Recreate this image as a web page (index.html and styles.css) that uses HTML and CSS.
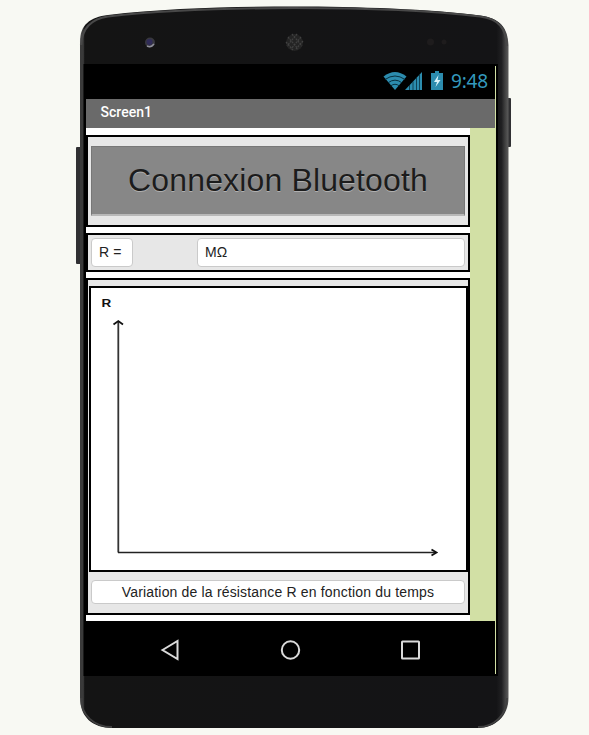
FILE: index.html
```html
<!DOCTYPE html>
<html lang="fr">
<head>
<meta charset="utf-8">
<title>Screen1</title>
<link rel="stylesheet" href="styles.css">
</head>
<body>
<div class="phone">
  <svg class="shell" width="589" height="735" viewBox="0 0 589 735" aria-hidden="true">
    <defs>
      <linearGradient id="edge" x1="0" x2="1" y1="0" y2="0">
        <stop offset="0" stop-color="#777"/><stop offset=".004" stop-color="#444"/><stop offset=".008" stop-color="#363636"/><stop offset=".011" stop-color="#141414"/>
        <stop offset=".972" stop-color="#141416"/><stop offset=".984" stop-color="#202022"/><stop offset=".992" stop-color="#404040"/><stop offset="1" stop-color="#5c5c5c"/>
      </linearGradient>
    </defs>
    <rect x="76" y="147" width="6" height="117" rx="1" fill="#303032"/>
    <rect x="506" y="98" width="5" height="49" rx="1" fill="#303032"/>
    <path d="M80 42C80 25 90 17 108 15C165 8 235 6.500 294 6.500C358 6.500 430 9 480 15.500C500 18 508 28 508.500 45V698C508.500 716 495 728 478 728H112C93 728 80 717 80 698Z" fill="url(#edge)"/>
    <path d="M81 45C82 28 91 19 108 16.500C165 10 235 8 294 8C358 8 430 10.500 480 16.500C499 19 506 28 507 46" fill="none" stroke="#484848" stroke-width="2.200"/>
    <path d="M81 698C81 715 94 727 112 727M478 727C494 727 507 715 507 698" fill="none" stroke="#404040" stroke-width="1.800"/>
    <path d="M81.500 45V698" stroke="#3a3a3a" stroke-width="3"/>
    <circle cx="150" cy="42.500" r="5" fill="#38383e"/><circle cx="149.500" cy="42" r="3" fill="#302c58"/><path d="M147 46q4 2 7-2" stroke="#8f8f9b" stroke-width="1.500" fill="none"/>
    <circle cx="294.500" cy="42.500" r="8.500" fill="#242424"/>
    <path d="M288 37l10 12M292 34l10 12M286 42l7 8M301 37l-10 12M297 34l-10 12M303 41l-7 8" stroke="#414141" stroke-width="1.200" stroke-dasharray="2 1"/>
    <circle cx="430.500" cy="42" r="3.500" fill="#1e1c1d"/><circle cx="444" cy="42" r="2.500" fill="#1e1c1d"/>
    <path d="M83.500 64H498V676H83.500Z" fill="#000"/>
  </svg>
  <main class="screen">
    <header class="status">
      <svg width="62" height="20" viewBox="383 71 62 20" aria-hidden="true">
        <path d="M395 90L383.500 76.500Q395 67.500 406.500 76.500Z" fill="#2c8cae"/>
        <path d="M385 79.500Q395 72.500 405 79.500M388 82.800Q395 77.500 402 82.800M390.500 86Q395 82.500 399.500 86" fill="none" stroke="#08303f" stroke-width="1"/>
        <path d="M405 90L422 72V90Z" fill="#2c8cae"/>
        <path d="M409.500 85V90M413 81.500V90M416.500 78V90M419.500 74.500V90" stroke="#08303f" stroke-width=".8"/>
        <path d="M431 73H435V71H439V73H443V90H431Z" fill="#2c8cae"/>
        <path d="M438.500 75L434 82H437L435.500 87L440.500 80H437.500Z" fill="#d9f3fa"/>
      </svg>
      <span class="clock">9:48</span>
    </header>
    <div class="title">Screen1</div>
    <div class="workspace">
      <div class="app">
        <section class="panel connect"><div class="button">Connexion Bluetooth</div></section>
        <section class="panel reading">
          <div class="field unit">R =</div>
          <div class="field value">MΩ</div>
        </section>
        <section class="panel chart">
          <div class="canvas">
            <svg width="375" height="282" viewBox="91 288 375 282">
              <text class="axis-name" transform="translate(101.500 307) scale(1.350 1)">R</text>
              <path d="M118.300 552.500V321" fill="none" stroke="#333" stroke-width="1.800"/>
              <path d="M118 552.500H436" fill="none" stroke="#222" stroke-width="1.400"/>
              <path d="M113.500 324.500L118.300 321L123 324.500M431.500 549.500L436.500 552.500L431.500 555.500" fill="none" stroke="#111" stroke-width="1.800"/>
            </svg>
          </div>
          <div class="field caption">Variation de la résistance R en fonction du temps</div>
        </section>
      </div>
    </div>
    <nav class="nav">
      <svg width="22" height="22" viewBox="0 0 22 22"><path d="M3.500 11L18.500 2V20Z"/></svg>
      <svg width="22" height="22" viewBox="0 0 22 22"><circle cx="11.500" cy="11" r="8.700"/></svg>
      <svg width="22" height="22" viewBox="0 0 22 22"><rect x="3" y="2.500" width="17" height="17" rx=".5"/></svg>
    </nav>
  </main>
</div>
</body>
</html>
```

FILE: styles.css
```css
* { box-sizing: border-box; }
body { margin: 0; background: #f8f9f3; font-family: "Liberation Sans", Arial, sans-serif; }
.phone { position: relative; width: 589px; height: 735px; padding: 66px 0 0 86px; overflow: hidden; }
.shell { position: absolute; left: 0; top: 0; }
.screen { position: relative; width: 410px; height: 608px; border-right: 1px solid #d2e0a5; }
.status { height: 33px; background: #000; display: flex; align-items: flex-start; justify-content: flex-end; gap: 6px; padding: 5px 7px 0 0; }
.clock { font: 19px/21px "Noto Sans", sans-serif; color: #3499be; width: 37px; white-space: nowrap; letter-spacing: -.2px; }
.title { height: 29px; background: #6a6a6a; color: #fff; font: 500 14px/27px Roboto, sans-serif; padding-left: 14.5px; letter-spacing: .03px; }
.workspace { width: 410px; height: 493px; background: #d2e0a5; }
.app { width: 384px; height: 493px; background: #fff; padding-top: 7px; display: flex; flex-direction: column; gap: 6px; }
.panel { border: 2px solid #000; background: #e7e7e7; }
.connect { height: 92px; padding: 9px 3px; }
.button { height: 70px; background: #878787; border: 1px solid #777; border-bottom: 2px solid #b8b8b8; color: #1c1c1c; font-size: 32px; line-height: 66px; text-align: center; letter-spacing: .14px; text-shadow: 0 1px 0 #b0b0b0; white-space: nowrap; }
.reading { height: 39px; padding: 3px; display: flex; justify-content: space-between; }
.field { height: 29px; border: 1px solid #cacaca; border-radius: 4px; background: #fff; color: #222; font-size: 14px; line-height: 27px; padding-left: 7px; white-space: nowrap; letter-spacing: .17px; }
.unit { width: 42px; }
.value { width: 268px; }
.chart { height: 337px; padding: 6px 0 0 1px; }
.canvas { width: 379px; height: 286px; border: 2px solid #000; background: #fff; }
.canvas svg { display: block; }
.axis-name { font: bold 10px "Liberation Sans", sans-serif; fill: #111; }
.caption { width: 374px; height: 24px; margin: 8px 0 0 2px; padding: 0; line-height: 23px; text-align: center; }
.nav { height: 53px; background: #000; display: flex; justify-content: space-between; align-items: center; padding: 5px 74px 0 73px; }
.nav svg { fill: none; stroke: #dadada; stroke-width: 2; }
```
